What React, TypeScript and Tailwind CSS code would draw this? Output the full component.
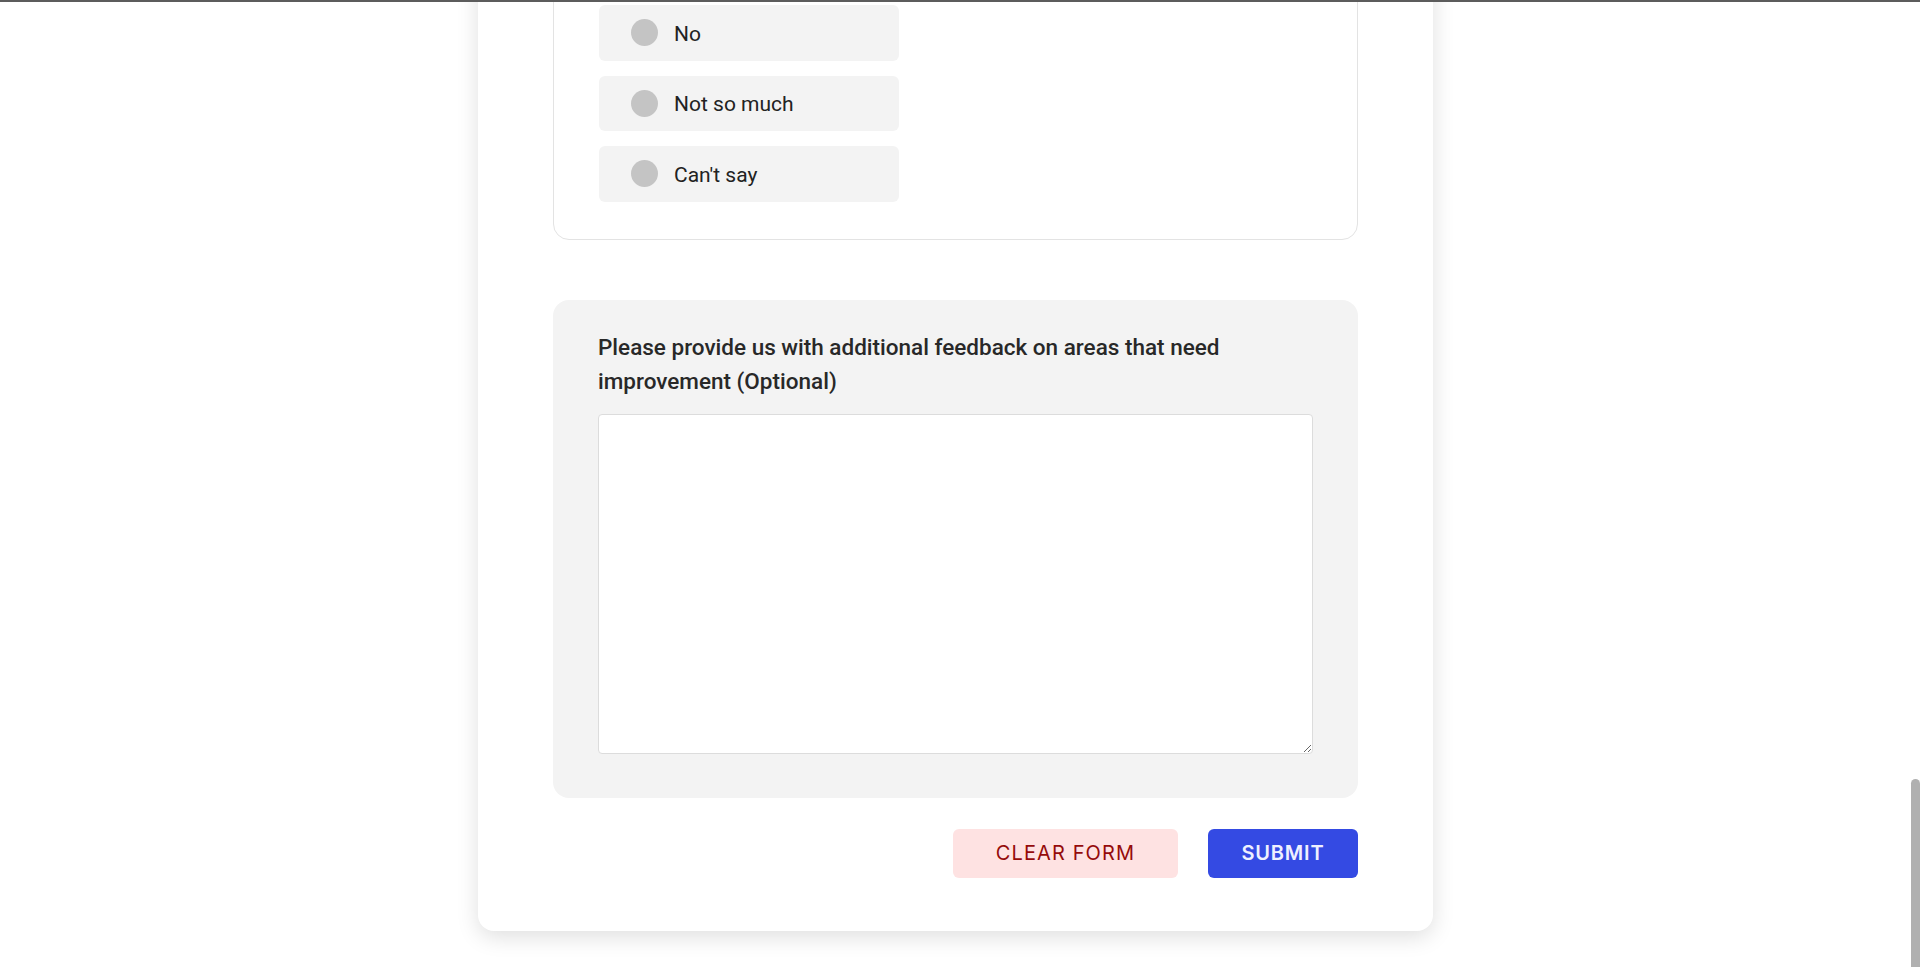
import { FC } from "react";

const options = ["No", "Not so much", "Can't say"];

const Option: FC<{ label: string }> = ({ label }) => (
  <label className="flex items-center w-[300px] h-[55.5px] rounded-[6px] bg-[#f3f3f3] pl-[32px] gap-[16px] cursor-pointer">
    <span className="w-[27px] h-[27px] rounded-full bg-[#c4c4c4] shrink-0" />
    <span className="text-[21px] leading-[28px] pt-[2px] text-[#222222]">{label}</span>
  </label>
);

export default function App() {
  return (
    <div className="relative flex h-[967px] overflow-hidden bg-white font-['Roboto',sans-serif]">
      {/* top edge line */}
      <div className="absolute top-0 left-0 right-0 h-[2px] bg-[#5c5c5c] z-10" />

      <main className="flex-1 flex justify-center">
        <div className="w-[955px] -mt-[120px] self-start rounded-2xl bg-white px-[75px] pt-[75px] pb-[53px] shadow-[0_6px_22px_rgba(0,0,0,0.13)]">
          {/* question box, top scrolled out of view */}
          <div className="rounded-2xl border border-[#e3e3e3] px-[45px] pt-[49px] pb-[37px]">
            <div className="flex flex-col gap-[15px]">
              {options.map((o) => (
                <Option key={o} label={o} />
              ))}
            </div>
          </div>

          {/* feedback */}
          <div className="mt-[60px] rounded-2xl bg-[#f3f3f3] px-[45px] pt-[30px] pb-[44px]">
            <p className="text-[22.5px] leading-[34px] font-medium text-[#282828]">
              Please provide us with additional feedback on areas that need
              <br />
              improvement (Optional)
            </p>
            <textarea className="block mt-[16px] w-full h-[340px] rounded-[4px] border border-[#dcdcdc] bg-white p-3 text-[16px] outline-none" />
          </div>

          <div className="mt-[31px] flex justify-end gap-[30px] font-['Inter',sans-serif]">
            <button className="w-[225px] h-[49px] rounded-[6px] bg-[#fee2e2] text-[#950b0b] text-[20px] tracking-[1.1px] uppercase">
              Clear form
            </button>
            <button className="w-[150px] h-[49px] rounded-[6px] bg-[#344ae3] text-[#eef0ff] text-[20px] font-semibold tracking-[0.8px] uppercase">
              Submit
            </button>
          </div>
        </div>
      </main>

      {/* overlay scrollbar */}
      <div className="w-[9px] shrink-0 flex flex-col pt-[779px]">
        <div className="flex-1 rounded-t-full bg-[#b0b0b0]" />
      </div>
    </div>
  );
}
